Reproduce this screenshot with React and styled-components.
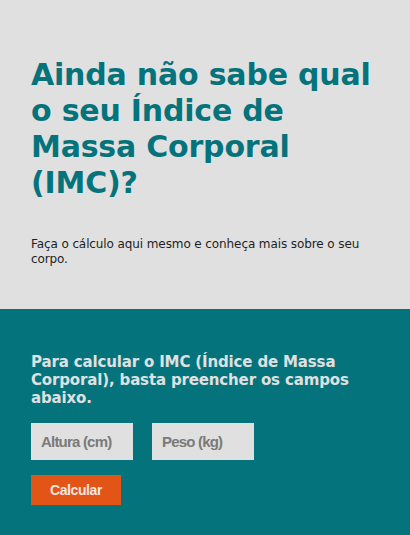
import React from "react";
import styled, { createGlobalStyle } from "styled-components";

const GlobalStyle = createGlobalStyle`
  html, body {
    margin: 0;
    padding: 0;
    background: #04737b;
  }
  * {
    box-sizing: border-box;
  }
`;

const Page = styled.main`
  width: 410px;
  font-family: "DejaVu Sans", Verdana, sans-serif;
`;

const Intro = styled.section`
  background: #e0e0e0;
  padding: 57px 31px 42px 31px;
`;

const Title = styled.h1`
  margin: 0 0 36px 0;
  font-size: 30px;
  line-height: 36px;
  font-weight: bold;
  letter-spacing: -0.2px;
  color: #04737b;
`;

const Lead = styled.p`
  margin: 0;
  font-size: 12px;
  line-height: 15px;
  letter-spacing: -0.1px;
  color: #1e1e1e;
`;

const Calculator = styled.section`
  background: #04737b;
  padding: 44px 31px 30px 31px;
`;

const Instructions = styled.h2`
  margin: 0 0 16px 0;
  font-size: 15px;
  line-height: 18px;
  font-weight: bold;
  letter-spacing: -0.15px;
  color: #e0e0e0;
`;

const Fields = styled.div`
  display: flex;
  gap: 19px;
  margin-bottom: 15px;
`;

const Field = styled.input`
  width: 102px;
  height: 37px;
  border: none;
  outline: none;
  background: #e0e0e0;
  padding: 0 10px;
  font-family: "Liberation Sans", Arial, sans-serif;
  font-size: 15px;
  font-weight: bold;
  letter-spacing: -0.8px;
  color: #333;
  &::placeholder {
    color: #7a7a7a;
  }
`;

const Button = styled.button`
  width: 90px;
  height: 30px;
  border: none;
  background: #e35516;
  color: #f2e6e0;
  font-family: "Liberation Sans", Arial, sans-serif;
  font-size: 14px;
  font-weight: bold;
  letter-spacing: -0.4px;
  cursor: pointer;
  padding: 0;
`;

export default function App() {
  return (
    <>
      <GlobalStyle />
      <Page>
        <Intro>
          <Title>Ainda não sabe qual o seu Índice de Massa Corporal (IMC)?</Title>
          <Lead>Faça o cálculo aqui mesmo e conheça mais sobre o seu corpo.</Lead>
        </Intro>
        <Calculator>
          <Instructions>
            Para calcular o IMC (Índice de Massa Corporal), basta preencher os
            campos abaixo.
          </Instructions>
          <Fields>
            <Field type="text" placeholder="Altura (cm)" />
            <Field type="text" placeholder="Peso (kg)" />
          </Fields>
          <Button type="button">Calcular</Button>
        </Calculator>
      </Page>
    </>
  );
}
